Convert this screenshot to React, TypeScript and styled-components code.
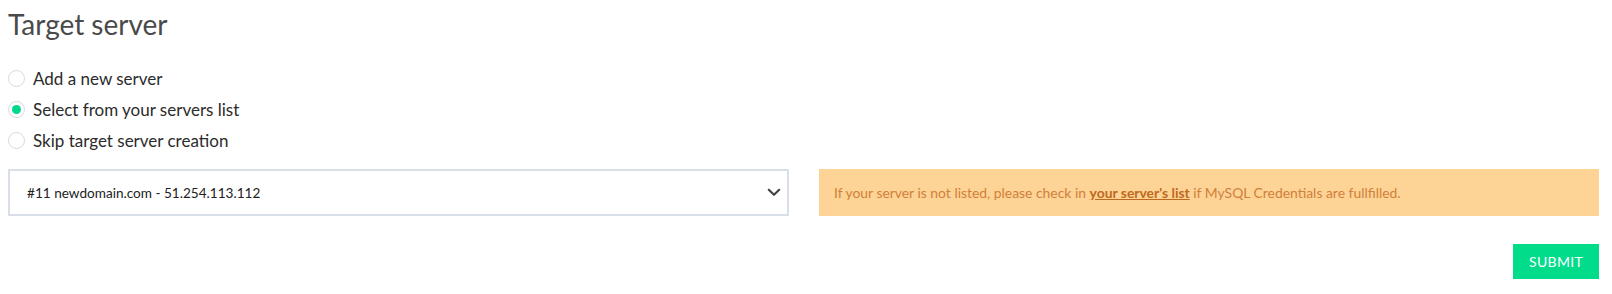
import styled, { createGlobalStyle } from "styled-components";
import { useState } from "react";

const GlobalStyle = createGlobalStyle`
  body {
    margin: 0;
    background: #ffffff;
    font-family: Lato, "Open Sans", Arial, sans-serif;
  }
`;

const servers = [
  { id: 11, name: "newdomain.com", ip: "51.254.113.112" },
  { id: 12, name: "olddomain.com", ip: "51.254.113.120" },
];

const options = [
  { key: "new", label: "Add a new server" },
  { key: "list", label: "Select from your servers list" },
  { key: "skip", label: "Skip target server creation" },
];

export default function App() {
  const [mode, setMode] = useState("list");
  const [server, setServer] = useState(servers[0].id);

  return (
    <Page>
      <GlobalStyle />
      <Title>Target server</Title>
      <RadioList>
        {options.map((o) => (
          <RadioRow key={o.key}>
            <RadioInput
              type="radio"
              name="target"
              checked={mode === o.key}
              onChange={() => setMode(o.key)}
            />
            <span>{o.label}</span>
          </RadioRow>
        ))}
      </RadioList>
      <Columns>
        <SelectWrap>
          <StyledSelect
            value={server}
            onChange={(e) => setServer(Number(e.target.value))}
          >
            {servers.map((s) => (
              <option key={s.id} value={s.id}>
                #{s.id} {s.name} - {s.ip}
              </option>
            ))}
          </StyledSelect>
          <Chevron width="14" height="9" viewBox="0 0 14 9">
            <path
              d="M1.8 1.8 L7 6.8 L12.2 1.8"
              fill="none"
              stroke="#444"
              strokeWidth="2.2"
              strokeLinecap="round"
              strokeLinejoin="round"
            />
          </Chevron>
        </SelectWrap>
        <Alert>
          If your server is not listed, please check in{" "}
          <a href="#servers">your server's list</a> if MySQL Credentials are
          fullfilled.
        </Alert>
      </Columns>
      <Actions>
        <SubmitButton type="button">Submit</SubmitButton>
      </Actions>
    </Page>
  );
}

const Page = styled.div`
  padding: 6px 13px 15px 8px;
`;

const Title = styled.h1`
  margin: 0;
  font-size: 28px;
  font-weight: 400;
  line-height: 36px;
  color: #4a4a4a;
`;

const RadioList = styled.div`
  margin-top: 25px;
  display: flex;
  flex-direction: column;
  gap: 8px;
`;

const RadioRow = styled.label`
  display: flex;
  align-items: center;
  gap: 8px;
  height: 23px;
  font-size: 17px;
  color: #2b2b2b;
  cursor: pointer;
`;

const RadioInput = styled.input`
  appearance: none;
  margin: 0;
  width: 17px;
  height: 17px;
  border-radius: 50%;
  border: 1px solid #d5d9e2;
  background: #fff;
  display: grid;
  place-items: center;
  &:checked::after {
    content: "";
    width: 9px;
    height: 9px;
    border-radius: 50%;
    background: #00d98b;
  }
`;

const Columns = styled.div`
  margin-top: 17px;
  display: grid;
  grid-template-columns: 781px 780px;
  column-gap: 30px;
`;

const SelectWrap = styled.div`
  position: relative;
`;

const StyledSelect = styled.select`
  appearance: none;
  width: 100%;
  height: 47px;
  padding: 0 40px 0 17px;
  border: 2px solid #d9dfe9;
  border-radius: 0;
  background: #fff;
  font-family: Lato, "Open Sans", Arial, sans-serif;
  font-size: 13.6px;
  color: #222;
  outline: none;
`;

const Chevron = styled.svg`
  position: absolute;
  right: 8px;
  top: 19px;
  pointer-events: none;
`;

const Alert = styled.div`
  height: 47px;
  box-sizing: border-box;
  display: flex;
  align-items: center;
  padding: 0 15px;
  background: #fed396;
  font-size: 13.9px;
  color: #d0803a;
  white-space: pre;
  a {
    color: #bd6a1f;
    font-weight: 700;
    text-decoration: underline;
  }
`;

const Actions = styled.div`
  margin-top: 28px;
  display: flex;
  justify-content: flex-end;
`;

const SubmitButton = styled.button`
  height: 35px;
  padding: 0 16px;
  border: none;
  border-radius: 0;
  background: #00dc8a;
  color: #fff;
  font-family: Lato, "Open Sans", Arial, sans-serif;
  font-size: 14px;
  text-transform: uppercase;
  letter-spacing: 0.3px;
  cursor: pointer;
`;
